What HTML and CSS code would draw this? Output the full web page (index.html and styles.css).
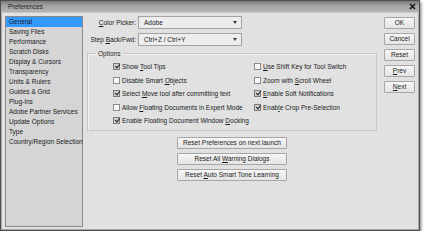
FILE: index.html
```html
<!DOCTYPE html>
<html>
<head>
    <title>Preferences</title>
    <link rel="stylesheet" href="styles.css">
</head>
<body>
    <div class="window">
        <div class="titlebar">
            <span class="title">Preferences</span>
            <svg class="close" width="7" height="7" viewBox="0 0 7 7"><path d="M1 1L6 6M6 1L1 6" stroke="#1a1a1a" stroke-width="1.6"/></svg>
        </div>
        <div class="content">
            <ul class="nav">
                <li class="active">General</li>
                <li>Saving Files</li>
                <li>Performance</li>
                <li>Scratch Disks</li>
                <li>Display &amp; Cursors</li>
                <li>Transparency</li>
                <li>Units &amp; Rulers</li>
                <li>Guides &amp; Grid</li>
                <li>Plug-Ins</li>
                <li>Adobe Partner Services</li>
                <li>Update Options</li>
                <li>Type</li>
                <li>Country/Region Selection</li>
            </ul>

            <div class="main">
                <div class="field">
                    <label class="lbl"><u>C</u>olor Picker:</label>
                    <div class="select">Adobe</div>
                </div>
                <div class="field">
                    <label class="lbl">Step <u>B</u>ack/Fwd:</label>
                    <div class="select">Ctrl+Z / Ctrl+Y</div>
                </div>

                <fieldset class="options">
                    <legend>Options</legend>
                    <div class="opt-grid">
                        <label class="opt"><span class="chk on"></span><span>Show <u>T</u>ool Tips</span></label>
                        <label class="opt"><span class="chk"></span><span><u>U</u>se Shift Key for Tool Switch</span></label>
                        <label class="opt"><span class="chk"></span><span>Disable Smart <u>O</u>bjects</span></label>
                        <label class="opt"><span class="chk"></span><span>Zoom with <u>S</u>croll Wheel</span></label>
                        <label class="opt"><span class="chk on"></span><span>Select <u>M</u>ove tool after committing text</span></label>
                        <label class="opt"><span class="chk on"></span><span><u>E</u>nable Soft Notifications</span></label>
                        <label class="opt"><span class="chk"></span><span>Allow <u>F</u>loating Documents in Expert Mode</span></label>
                        <label class="opt"><span class="chk on"></span><span>Enab<u>l</u>e Crop Pre-Selection</span></label>
                        <label class="opt wide"><span class="chk on"></span><span>Enable Floating Document Window <u>D</u>ocking</span></label>
                    </div>
                </fieldset>

                <div class="resets">
                    <button class="btn">Reset Preferences on next launch</button>
                    <button class="btn">Reset All <u>W</u>arning Dialogs</button>
                    <button class="btn">Reset <u>A</u>uto Smart Tone Learning</button>
                </div>
            </div>

            <div class="actions">
                <button class="btn">OK</button>
                <button class="btn">Cancel</button>
                <button class="btn">Reset</button>
                <button class="btn"><u>P</u>rev</button>
                <button class="btn"><u>N</u>ext</button>
            </div>
        </div>
    </div>
</body>
</html>
```

FILE: styles.css
```css
body {
    margin: 0;
    background: #ffffff;
    font-family: "Liberation Sans", Arial, sans-serif;
    font-size: 6.5px;
    color: #1a1a1a;
}
u {
    text-decoration: underline;
    text-underline-offset: 1px;
}
.window {
    width: 420px;
    height: 231px;
    box-sizing: border-box;
    border: 1px solid #4e4e4e;
    background: #e1e1e1;
    box-shadow: inset 0 0 0 1px #a8a8a8, 1px 2px 3px rgba(0,0,0,0.55);
    display: flex;
    flex-direction: column;
}
.titlebar {
    height: 11px;
    display: flex;
    align-items: center;
    justify-content: space-between;
    padding: 0 3px 0 7px;
    background: linear-gradient(#7c7c7c, #a4a4a4 45%, #b3b3b3);
    border-bottom: 1px solid #c8c8c8;
}
.title {
    color: #202020;
    font-size: 6.5px;
}
.content {
    flex: 1;
    display: flex;
    padding: 3px 3px 3px 4px;
    min-height: 0;
}
.nav {
    list-style: none;
    margin: 0;
    padding: 0;
    width: 78px;
    box-sizing: border-box;
    border: 1px solid #8a8a8a;
    background: #d5d5d5;
}
.nav li {
    height: 10px;
    line-height: 10px;
    padding-left: 3px;
    white-space: nowrap;
}
.nav li.active {
    background: #3399ff;
}
.main {
    width: 290px;
    margin-left: 4px;
    display: flex;
    flex-direction: column;
}
.field {
    display: flex;
    align-items: center;
    height: 13px;
    margin-bottom: 4px;
}
.lbl {
    width: 49px;
    text-align: right;
    margin-right: 2px;
    white-space: nowrap;
}
.select {
    width: 104px;
    height: 13px;
    box-sizing: border-box;
    border: 1px solid #a3a3a3;
    background: #ededed;
    padding-left: 5px;
    line-height: 11px;
    position: relative;
}
.select::after {
    content: "";
    position: absolute;
    right: 4px;
    top: 4px;
    border-left: 2.5px solid transparent;
    border-right: 2.5px solid transparent;
    border-top: 3px solid #3a3a3a;
}
.options {
    margin: -1px 0 0 0;
    padding: 0 0 2px 8px;
    border: 1px solid #c6c6c6;
    box-shadow: inset 1px 1px 0 #f2f2f2;
    min-width: 0;
}
.options legend {
    padding: 0 2px;
    line-height: 9px;
}
.opt-grid {
    margin: 2px 0 0 17px;
    display: grid;
    grid-template-columns: 141px 1fr;
    grid-auto-rows: 13.5px;
}
.opt {
    display: flex;
    align-items: center;
    white-space: nowrap;
}
.wide {
    grid-column: 1 / 3;
}
.chk {
    width: 7px;
    height: 7px;
    box-sizing: border-box;
    border: 1px solid #8c8c8c;
    background: #f8f8f8;
    margin-right: 2px;
    position: relative;
    flex-shrink: 0;
}
.chk.on {
    background: #cfcfcf;
    border-color: #7a7a7a;
}
.chk.on::after {
    content: "";
    position: absolute;
    left: 1.5px;
    top: -1px;
    width: 2px;
    height: 4px;
    border-right: 1.5px solid #222;
    border-bottom: 1.5px solid #222;
    transform: rotate(40deg);
}
.btn {
    font: inherit;
    color: #1a1a1a;
    height: 12px;
    padding: 0;
    border: 1px solid #a6a6a6;
    border-radius: 1px;
    background: linear-gradient(#f6f6f6, #e4e4e4);
    line-height: 10px;
    white-space: nowrap;
}
.resets {
    margin-top: 6px;
    display: flex;
    flex-direction: column;
    align-items: center;
    gap: 4px;
}
.resets .btn {
    width: 110px;
}
.actions {
    width: 31px;
    margin-left: 7px;
    padding-top: 1px;
    display: flex;
    flex-direction: column;
    gap: 4px;
}
.actions .btn {
    width: 31px;
}
```
